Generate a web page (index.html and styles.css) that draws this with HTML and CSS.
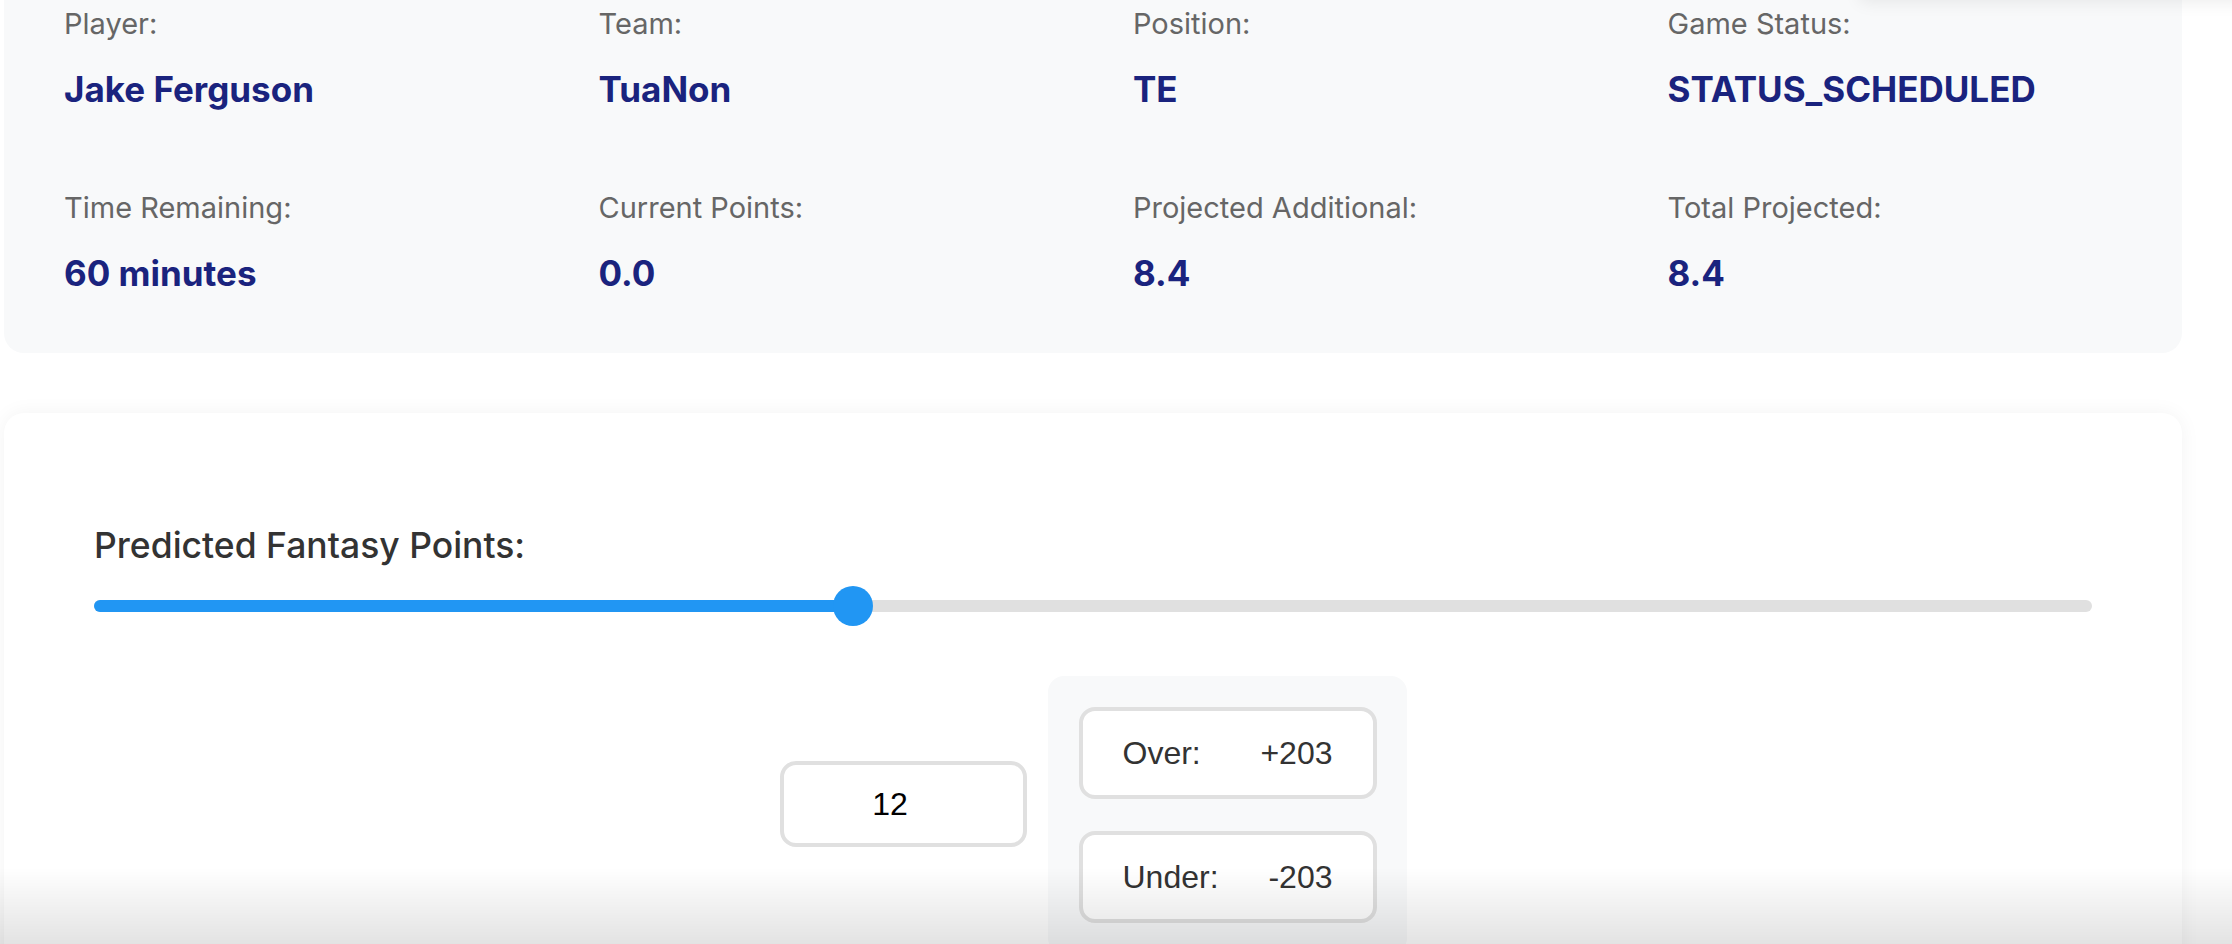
FILE: index.html
```html
<!DOCTYPE html>
<html lang="en">
<head>
<meta charset="utf-8">
<title>Player Projection</title>
<link rel="stylesheet" href="styles.css">
</head>
<body>
<div class="page">
  <section class="info-card">
    <div class="info-grid">
      <div class="info-item"><div class="info-label">Player:</div><div class="info-value">Jake Ferguson</div></div>
      <div class="info-item"><div class="info-label">Team:</div><div class="info-value">TuaNon</div></div>
      <div class="info-item"><div class="info-label">Position:</div><div class="info-value">TE</div></div>
      <div class="info-item"><div class="info-label">Game Status:</div><div class="info-value">STATUS_SCHEDULED</div></div>
      <div class="info-item"><div class="info-label">Time Remaining:</div><div class="info-value">60 minutes</div></div>
      <div class="info-item"><div class="info-label">Current Points:</div><div class="info-value">0.0</div></div>
      <div class="info-item"><div class="info-label">Projected Additional:</div><div class="info-value">8.4</div></div>
      <div class="info-item"><div class="info-label">Total Projected:</div><div class="info-value">8.4</div></div>
    </div>
  </section>

  <section class="predict-card">
    <div class="predict-label">Predicted Fantasy Points:</div>
    <div class="slider">
      <div class="slider-track"><div class="slider-fill" style="width:38%"></div></div>
      <div class="slider-thumb" style="left:38%"></div>
    </div>
    <div class="bet-row">
      <input class="points-input" type="number" value="12">
      <div class="odds-panel">
        <div class="odds-box"><span>Over:</span><span>+203</span></div>
        <div class="odds-box"><span>Under:</span><span>-203</span></div>
      </div>
    </div>
  </section>
</div>
<div class="top-menu"></div>
<div class="bottom-fade"></div>
</body>
</html>
```

FILE: styles.css
```css
html, body {
  margin: 0;
  padding: 0;
  background: #ffffff;
  overflow: hidden;
}

.page {
  width: 2178px;
  padding-left: 4px;
  margin-top: -53px;
}

.info-card {
  background: #f8f9fa;
  border-radius: 20px;
  padding: 40px 40px 38px;
}

.info-grid {
  display: grid;
  grid-template-columns: repeat(4, 1fr);
  gap: 40px;
}

.info-item {
  padding: 20px;
}

.info-label {
  font-family: Inter, "Noto Sans", sans-serif;
  font-weight: 400;
  font-size: 29px;
  line-height: 34px;
  color: #666666;
  margin-bottom: 26px;
}

.info-value {
  font-family: Inter, "Noto Sans", sans-serif;
  font-weight: 700;
  font-size: 35px;
  line-height: 44px;
  color: #1a237e;
}

.predict-card {
  margin-top: 60px;
  background: #ffffff;
  border-radius: 20px;
  box-shadow: 0 0 20px rgba(0, 0, 0, 0.05);
  padding: 113px 90px 0;
  height: 600px;
  box-sizing: border-box;
}

.predict-label {
  font-family: Inter, "Noto Sans", sans-serif;
  font-weight: 500;
  font-size: 35.5px;
  line-height: 40px;
  color: #333333;
  margin-bottom: 20px;
}

.slider {
  position: relative;
  height: 40px;
  display: flex;
  align-items: center;
}

.slider-track {
  width: 100%;
  height: 12px;
  background: #e0e0e0;
  border-radius: 6px;
  overflow: hidden;
}

.slider-fill {
  height: 100%;
  background: #2196f3;
}

.slider-thumb {
  position: absolute;
  top: 0;
  width: 40px;
  height: 40px;
  border-radius: 50%;
  background: #2196f3;
  transform: translateX(-50%);
}

.bet-row {
  display: flex;
  justify-content: center;
  align-items: center;
  gap: 21px;
  margin-top: 50px;
}

.points-input {
  width: 247px;
  height: 86px;
  box-sizing: border-box;
  border: 4px solid #e0e0e0;
  border-radius: 16px;
  background: #ffffff;
  font-family: "Liberation Sans", Arial, sans-serif;
  font-size: 32px;
  color: #000000;
  text-align: center;
  padding: 0 26px 0 0;
  margin: 0 0 22px 0;
  outline: none;
  -moz-appearance: textfield;
}

.points-input::-webkit-inner-spin-button,
.points-input::-webkit-outer-spin-button {
  -webkit-appearance: none;
  margin: 0;
}

.odds-panel {
  background: #f8f9fa;
  border-radius: 16px;
  padding: 31px 30px 31px 31px;
  display: flex;
  flex-direction: column;
  gap: 32px;
}

.odds-box {
  width: 298px;
  height: 92px;
  box-sizing: border-box;
  border: 4px solid #e0e0e0;
  border-radius: 16px;
  background: #ffffff;
  display: flex;
  justify-content: space-between;
  align-items: center;
  padding: 0 40px;
  font-family: "Liberation Sans", Arial, sans-serif;
  font-size: 32px;
  color: #333333;
}

.top-menu {
  position: fixed;
  top: -60px;
  left: 1860px;
  width: 420px;
  height: 60px;
  background: #ffffff;
  box-shadow: 0 2px 16px rgba(0, 0, 0, 0.08);
}

.bottom-fade {
  position: fixed;
  left: 0;
  right: 0;
  bottom: 0;
  height: 76px;
  background: linear-gradient(to bottom, rgba(0, 0, 0, 0), rgba(0, 0, 0, 0.11));
  pointer-events: none;
}
```
